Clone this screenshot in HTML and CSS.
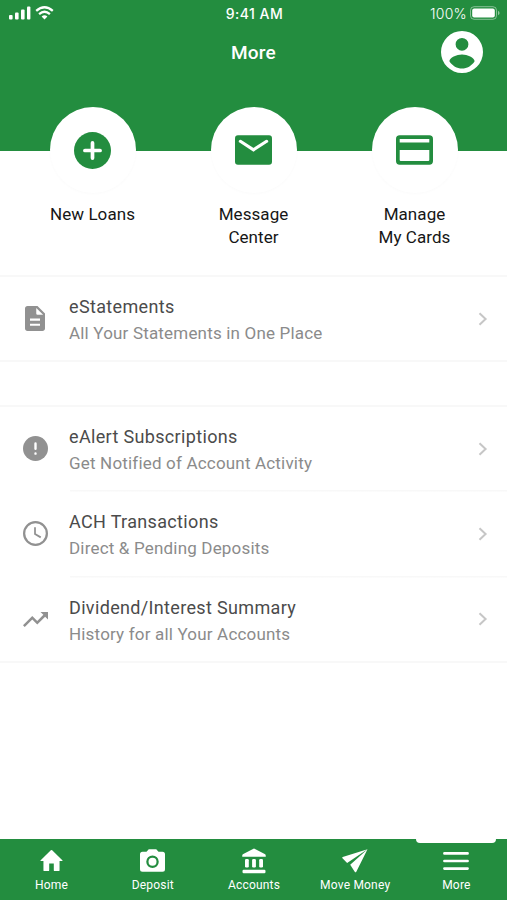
FILE: index.html
```html
<!DOCTYPE html>
<html lang="en">
<head>
<meta charset="utf-8">
<title>More</title>
<link rel="stylesheet" href="styles.css">
</head>
<body>
<div class="app">
  <header class="header">
    <div class="status">
      <div class="status-left">
        <svg width="22" height="14" viewBox="0 0 22 14"><rect x="0" y="9" width="3.6" height="4.6" rx="1"/><rect x="6" y="6.5" width="3.6" height="7.1" rx="1"/><rect x="12" y="3.5" width="3.6" height="10.1" rx="1"/><rect x="18" y="0.5" width="3.4" height="13.1" rx="1"/></svg>
        <svg width="19" height="14" viewBox="0 0 19 14"><g fill="none" stroke="#fff" stroke-width="2.3"><path d="M1.2 4.9Q9.5-2.3 17.8 4.9"/><path d="M4.1 8.1Q9.5 3.5 14.9 8.1"/></g><path d="M6.6 10.5Q9.5 8 12.4 10.5L9.5 13.6z"/></svg>
      </div>
      <div class="status-time">9:41 AM</div>
      <div class="status-right">
        <span>100%</span>
        <svg width="30" height="14" viewBox="0 0 30 14"><rect x=".5" y=".7" width="26" height="12.6" rx="3.6" fill="none" stroke="#fff" stroke-opacity=".45"/><rect x="2.2" y="2.4" width="22.6" height="9.2" rx="2"/><path d="M28 4.8v4.4q1.6-.8 1.6-2.2T28 4.8z" fill-opacity=".5"/></svg>
      </div>
    </div>
    <div class="titlebar">
      <h1>More</h1>
      <svg class="profile" viewBox="2 2 20 20"><path fill-rule="evenodd" d="M12 2a10 10 0 1 1 0 20 10 10 0 0 1 0-20zM12 5.300a3.050 3.050 0 1 0 0 6.100 3.050 3.050 0 0 0 0-6.100zM12 13.200c-2.500 0-6 1.500-6 3.200 1.400 2.200 3.600 3.500 6 3.500s4.600-1.300 6-3.500c0-1.700-3.500-3.200-6-3.200z"/></svg>
    </div>
  </header>

  <section class="actions">
    <div class="action">
      <div class="disc"><svg width="37" height="37" viewBox="2 2 20 20"><circle cx="12" cy="12" r="10"/><path d="M12 7.900v8.200M7.900 12h8.200" stroke="#fff" stroke-width="2" stroke-linecap="round"/></svg></div>
      <p>New Loans</p>
    </div>
    <div class="action">
      <div class="disc"><svg width="37" height="30" viewBox="2 4 20 16"><rect x="2" y="4" width="20" height="16" rx="1.600"/><path d="M4.900 7.300L12 11.900l7.100-4.600" fill="none" stroke="#fff" stroke-width="1.700" stroke-linecap="round"/></svg></div>
      <p>Message<br>Center</p>
    </div>
    <div class="action">
      <div class="disc"><svg width="37" height="30" viewBox="2 4 20 16"><path fill-rule="evenodd" d="M4 4h16a2 2 0 0 1 2 2v12a2 2 0 0 1-2 2H4a2 2 0 0 1-2-2V6a2 2 0 0 1 2-2zM4 6v2h16V6zM4 12v5.400q0 .6.600.6h14.800q.6 0 .6-.6V12z"/></svg></div>
      <p>Manage<br>My Cards</p>
    </div>
  </section>

  <ul class="list list-first">
    <li class="row">
      <svg class="lead" width="20" height="25" viewBox="4 2 16 20"><path fill-rule="evenodd" d="M14 2H6c-1.100 0-2 .9-2 2v16c0 1.100.9 2 2 2h12c1.100 0 2-.9 2-2V8zM13 3.500L18.500 9H14q-1 0-1-1zM8 12h8v1.700H8zM8 16.100h8v1.700H8z"/></svg>
      <div class="text"><h2>eStatements</h2><p>All Your Statements in One Place</p></div>
      <svg class="chev" viewBox="0 0 10 14"><path d="M1.500 1.200L7.600 7l-6.100 5.800"/></svg>
    </li>
  </ul>

  <ul class="list">
    <li class="row">
      <svg class="lead" width="25" height="25" viewBox="2 2 20 20"><circle cx="12" cy="12" r="10"/><path d="M12 8v4.200M12 15.900v.2" stroke="#fff" stroke-width="1.900" stroke-linecap="round"/></svg>
      <div class="text"><h2>eAlert Subscriptions</h2><p>Get Notified of Account Activity</p></div>
      <svg class="chev" viewBox="0 0 10 14"><path d="M1.500 1.200L7.600 7l-6.100 5.800"/></svg>
    </li>
    <li class="row">
      <svg class="lead" width="25" height="25" viewBox="2 2 20 20"><g fill="none" stroke="#919191"><circle cx="12" cy="12" r="9.100" stroke-width="1.800"/><path d="M11.600 7v5.400l4.600 2.700" stroke-width="1.400"/></g></svg>
      <div class="text"><h2>ACH Transactions</h2><p>Direct &amp; Pending Deposits</p></div>
      <svg class="chev" viewBox="0 0 10 14"><path d="M1.500 1.200L7.600 7l-6.100 5.800"/></svg>
    </li>
    <li class="row">
      <svg class="lead" width="25" height="15" viewBox="2 6 20 12"><path d="M16 6l2.290 2.290-4.880 4.880-4-4L2 16.590 3.410 18l6-6 4 4 6.300-6.290L22 12V6z"/></svg>
      <div class="text"><h2>Dividend/Interest Summary</h2><p>History for all Your Accounts</p></div>
      <svg class="chev" viewBox="0 0 10 14"><path d="M1.500 1.200L7.600 7l-6.100 5.800"/></svg>
    </li>
  </ul>

  <nav class="tabs">
    <a class="tab"><span class="ico"><svg width="23" height="21" viewBox="2 3 20 17" preserveAspectRatio="none"><path d="M10 19.300V14h4v5.300q0 .7.700.7h3.600q.7 0 .7-.7V12h2.100q.9 0 .3-.7L12.600 3.300q-.6-.6-1.200 0l-8.800 8q-.6.7.3.7H5v7.300q0 .7.700.7h3.600q.7 0 .7-.7z"/></svg></span><span class="label">Home</span></a>
    <a class="tab"><span class="ico"><svg width="25" height="23" viewBox="2 2 20 18"><path fill-rule="evenodd" d="M9 2L7.200 4H4a2 2 0 0 0-2 2v12a2 2 0 0 0 2 2h16a2 2 0 0 0 2-2V6a2 2 0 0 0-2-2h-3.200L15 2zM12 7a5 5 0 1 1 0 10 5 5 0 0 1 0-10z"/><circle cx="12" cy="12" r="3.200"/></svg></span><span class="label">Deposit</span></a>
    <a class="tab"><span class="ico"><svg width="24" height="26" viewBox="0 0 24 26"><path d="M12 0.500L23.200 6.300Q24 7 23.700 8.800H.3Q0 7 .8 6.300z"/><rect x="3" y="11" width="3.800" height="8.500" rx="1.200"/><rect x="10.100" y="11" width="3.800" height="8.500" rx="1.200"/><rect x="17.200" y="11" width="3.800" height="8.500" rx="1.200"/><rect x=".5" y="21.700" width="23" height="3.600" rx="1.200"/></svg></span><span class="label">Accounts</span></a>
    <a class="tab"><span class="ico"><svg width="26" height="24" viewBox="0 0 26 24"><path d="M25.500.3L.7 8q-.8.500-.2 1.200l4.600 4.900zM25.500.3L8.200 15.700l4.700 7.200q.8.900 1.400-.1z"/></svg></span><span class="label">Move Money</span></a>
    <a class="tab active"><span class="ico"><svg width="26" height="18" viewBox="0 0 26 18"><path d="M1.400 1.400h23.200M1.400 9h23.200M1.400 16.600h23.200" stroke="#fff" stroke-width="2.600" stroke-linecap="round"/></svg></span><span class="label">More</span></a>
  </nav>
</div>
</body>
</html>
```

FILE: styles.css
```css
* { box-sizing: border-box; margin: 0; padding: 0; }
body { background: #fff; font-family: Roboto, "Liberation Sans", sans-serif; }
svg { display: block; flex: none; }
.app { width: 507px; height: 900px; display: flex; flex-direction: column; overflow: hidden; }

.header { height: 151px; flex: none; background: #238d3f; color: #fff; fill: #fff; }
.status { height: 27px; display: grid; grid-template-columns: 1fr auto 1fr; align-items: center; padding: 0 7px 0 9px; font-family: Inter, sans-serif; }
.status-left { display: flex; gap: 4px; margin-top: -1px; }
.status-time { font-size: 14px; font-weight: 500; letter-spacing: .5px; }
.status-right { display: flex; justify-content: flex-end; align-items: center; gap: 3px; font-size: 14px; font-weight: 300; letter-spacing: .3px; }
.status-right svg { margin-top: -1px; }
.titlebar { height: 50px; display: grid; grid-template-columns: 1fr auto 1fr; align-items: center; padding: 0 24px; }
.titlebar h1 { grid-column: 2; font-size: 19px; font-weight: 500; letter-spacing: .2px; line-height: 24px; margin-top: 2px; }
.profile { width: 42px; height: 42px; justify-self: end; }

.actions { display: grid; grid-template-columns: repeat(3, 1fr); padding: 0 12px; margin-top: -44px; height: 168px; flex: none; }
.action { display: flex; flex-direction: column; align-items: center; text-align: center; }
.disc { width: 86px; height: 86px; border-radius: 50%; background: #fff; display: flex; align-items: center; justify-content: center; fill: #238d3f; box-shadow: 0 1px 3px rgba(0, 0, 0, .02); }
.action p { margin-top: 10px; font-size: 17px; line-height: 23px; letter-spacing: .07px; color: #161616; }

.list { list-style: none; flex: none; border-top: 2px solid #f8f8f8; border-bottom: 2px solid #f8f8f8; }
.list-first { margin-bottom: 43px; }
.row { height: 85.500px; display: grid; grid-template-columns: 69px 1fr 29px; align-items: center; }
.row:first-child { height: 83px; }
.row + .row { padding-top: 1.500px; background: linear-gradient(#f8f8f8, #f8f8f8) 70px 0 / 437px 1.500px no-repeat; }
.lead { fill: #919191; justify-self: center; margin-left: 1px; }
.text { padding-top: 3px; }
.text h2 { font-size: 18px; font-weight: 400; line-height: 26px; letter-spacing: .34px; color: #4b4b4b; }
.text p { font-size: 17px; line-height: 26px; letter-spacing: .18px; color: #8b8b8b; }
.chev { width: 10px; height: 14px; fill: none; stroke: #c6c6c6; stroke-width: 2; }

.tabs { margin-top: auto; height: 61px; flex: none; display: grid; grid-template-columns: repeat(5, 1fr); padding-left: 1px; background: #238d3f; color: #fff; fill: #fff; }
.tab { display: flex; flex-direction: column; align-items: center; position: relative; }
.ico { height: 27px; margin-top: 8px; display: flex; align-items: center; }
.label { font-size: 12px; line-height: 16px; margin-top: 3px; letter-spacing: .2px; }
.active::before { content: ""; position: absolute; top: 0; left: 10px; width: 80px; height: 4px; background: #fff; border-radius: 0 0 4px 4px; }
```
